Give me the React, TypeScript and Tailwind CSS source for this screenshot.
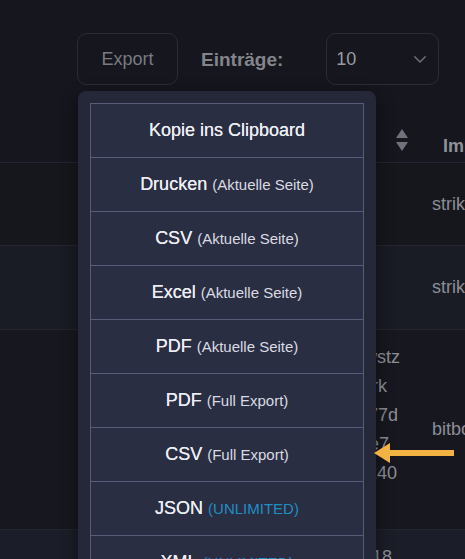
import React from 'react';

type ExportItem = {
  label: string;
  note: string;
  highlight?: boolean;
};

const items: ExportItem[] = [
  { label: 'Kopie ins Clipboard', note: '' },
  { label: 'Drucken', note: '(Aktuelle Seite)' },
  { label: 'CSV', note: '(Aktuelle Seite)' },
  { label: 'Excel', note: '(Aktuelle Seite)' },
  { label: 'PDF', note: '(Aktuelle Seite)' },
  { label: 'PDF', note: '(Full Export)' },
  { label: 'CSV', note: '(Full Export)' },
  { label: 'JSON', note: '(UNLIMITED)', highlight: true },
  { label: 'XML', note: '(UNLIMITED)', highlight: true },
];

// tails of a wrapped address, most of it sits under the menu
const hashLines = [
  { text: 'bc1q8fmwstz', pad: 'pr-0' },
  { text: 'h3kq0rk', pad: 'pr-[13px]' },
  { text: '9x2e4a77d', pad: 'pr-[2px]' },
  { text: 'uw5f1e7', pad: 'pr-[11px]' },
  { text: 'pq0cb240', pad: 'pr-[3px]' },
  { text: 'a1', pad: 'pr-[60px]' },
];

function SortIcon() {
  return (
    <svg width="12" height="22" viewBox="0 0 12 22" className="text-[#6f717c]">
      <path d="M6 0 L12 9 L0 9 Z" fill="currentColor" />
      <path d="M6 22 L12 13 L0 13 Z" fill="currentColor" />
    </svg>
  );
}

function ExportMenu() {
  return (
    <div className="absolute left-[78px] top-[91px] w-[298px] h-[480px] rounded-lg bg-[#252839] px-3 pt-3 shadow-[0_6px_18px_rgba(0,0,0,0.45)]">
      <div className="border-x border-t border-[#575c78]">
        {items.map((item, i) => (
          <div
            key={`${item.label}-${i}`}
            className="h-[54px] flex items-center justify-center gap-[5px] border-b border-[#575c78] bg-[#2a2e43]"
          >
            <span className="text-[18px] text-[#eceef3] [text-shadow:0_0_0.4px_#eceef3]">{item.label}</span>
            {item.note && (
              <span
                className={
                  item.highlight
                    ? 'text-[15px] text-[#1f8dc4] mt-[2px]'
                    : 'text-[15px] text-[#d9dbe2] mt-[2px]'
                }
              >
                {item.note}
              </span>
            )}
          </div>
        ))}
      </div>
    </div>
  );
}

export default function App() {
  return (
    <div className="relative w-[465px] h-[559px] overflow-hidden bg-[#15161e] font-['Liberation_Sans',Arial,sans-serif]">
      {/* Toolbar */}
      <div className="h-[100px] flex items-start pt-[33px] pl-[77px]">
        <button className="shrink-0 w-[101px] h-[52px] rounded-[10px] border border-[#2a2c37] text-[18px] text-[#7a7b80]">
          Export
        </button>
        <span className="shrink-0 ml-[23px] mt-[13px] text-[19px] font-bold text-[#84858b]">
          Einträge:
        </span>
        <div className="shrink-0 ml-[43px] w-[113px] h-[52px] rounded-[10px] border border-[#2a2c37] flex items-center justify-between pl-[9px] pr-[9px]">
          <span className="text-[18px] text-[#9a9ba1]">10</span>
          <svg width="18" height="18" viewBox="0 0 24 24" fill="none" stroke="#6c6e78" strokeWidth="2" strokeLinecap="round" strokeLinejoin="round">
            <path d="M5 9l7 7 7-7" />
          </svg>
        </div>
      </div>

      {/* Table header */}
      <div className="h-[63px] flex items-end border-b border-[#23252f]">
        <div className="shrink-0 w-[396px]" />
        <div className="shrink-0 w-[12px] mb-[11px]">
          <SortIcon />
        </div>
        <div className="shrink-0 pl-[35px] pb-[2px] text-[18px] font-bold text-[#8f9199] whitespace-nowrap">
          Impact
        </div>
      </div>

      {/* Row 1 */}
      <div className="h-[83px] flex items-center bg-[#16171c] border-b border-[#23252f]">
        <div className="shrink-0 w-[432px]" />
        <span className="shrink-0 text-[18px] text-[#8c8e95] whitespace-nowrap">strike</span>
      </div>

      {/* Row 2 */}
      <div className="h-[84px] flex items-center bg-[#191b25] border-b border-[#23252f]">
        <div className="shrink-0 w-[432px]" />
        <span className="shrink-0 text-[18px] text-[#8c8e95] whitespace-nowrap">strike</span>
      </div>

      {/* Row 3 */}
      <div className="h-[200px] flex items-center bg-[#17181f] border-b border-[#23252f]">
        <div className="shrink-0 w-[300px]" />
        <div className="shrink-0 w-[100px] flex flex-col items-end">
          {hashLines.map((l) => (
            <span key={l.text} className={`text-[18px] leading-[29px] text-[#8c8e95] whitespace-nowrap ${l.pad}`}>
              {l.text}
            </span>
          ))}
        </div>
        <div className="shrink-0 w-[32px]" />
        <span className="shrink-0 text-[18px] text-[#8c8e95] whitespace-nowrap">bitbot</span>
      </div>

      {/* Row 4 */}
      <div className="h-[40px] flex items-start bg-[#1b1d28] pt-[14px]">
        <div className="shrink-0 w-[300px]" />
        <div className="shrink-0 w-[92px] flex justify-end">
          <span className="text-[18px] text-[#8c8e95] whitespace-nowrap">2024-18</span>
        </div>
      </div>

      <ExportMenu />

      {/* Pointer arrow */}
      <svg className="absolute left-[373px] top-[442px]" width="82" height="22" viewBox="0 0 82 22">
        <path d="M16 8 H81 V14 H16 Z" fill="#f3b343" />
        <path d="M1 11 L17 1 L17 21 Z" fill="#f3b343" />
      </svg>
    </div>
  );
}
